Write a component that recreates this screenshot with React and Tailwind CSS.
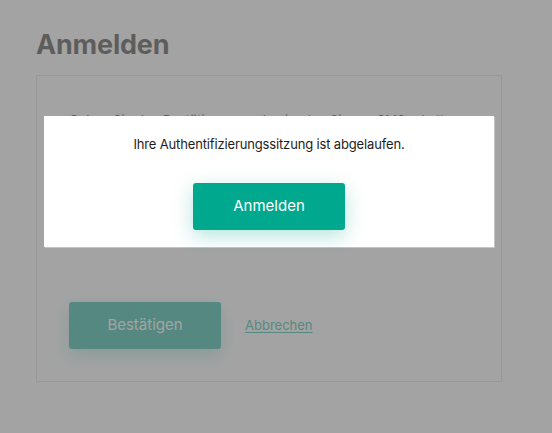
const App = () => {
  return (
    <div
      className="relative min-h-screen w-screen overflow-hidden bg-white"
      style={{ fontFamily: "Inter, 'Noto Sans', sans-serif" }}
    >
      {/* page beneath */}
      <div className="px-[36px] pt-[28px]">
        <h1 className="text-[27px] leading-[34px] font-bold text-[#1d1d1b] tracking-[-0.2px]">Anmelden</h1>
        <div className="mt-[13px] w-[466px] h-[307px] border border-[#dcdcdc] pl-[32px] pt-[34px] flex flex-col">
          <p className="text-[13px] leading-[20px] text-[#1d1d1b] whitespace-nowrap">
            Geben Sie den Bestätigungscode ein, den Sie per SMS erhalten
          </p>
          <div className="mt-auto mb-[32px] flex items-center gap-[24px]">
            <button className="w-[152px] h-[47px] rounded-[3px] bg-[#00a88e] text-white text-[15px] shadow-[0_6px_18px_rgba(0,168,142,0.35)]">
              Bestätigen
            </button>
            <a className="text-[13px] text-[#00a88e] underline underline-offset-2">Abbrechen</a>
          </div>
        </div>
      </div>

      {/* dim overlay */}
      <div className="absolute inset-0 bg-[#797979]/[0.69]" />

      {/* session dialog */}
      <div className="absolute left-[44px] top-[116px] w-[450px] h-[131px] bg-white shadow-[1px_1px_0_#c4c4c4] flex flex-col items-center">
        <p className="mt-[19px] text-[13px] leading-[18px] tracking-[-0.15px] text-[#1d1d1b]">
          Ihre Authentifizierungssitzung ist abgelaufen.
        </p>
        <button className="mt-[30px] w-[152px] h-[47px] rounded-[3px] bg-[#00a88e] text-white text-[15px] shadow-[0_6px_20px_rgba(0,168,142,0.3)]">
          Anmelden
        </button>
      </div>
    </div>
  );
};

export default App;
